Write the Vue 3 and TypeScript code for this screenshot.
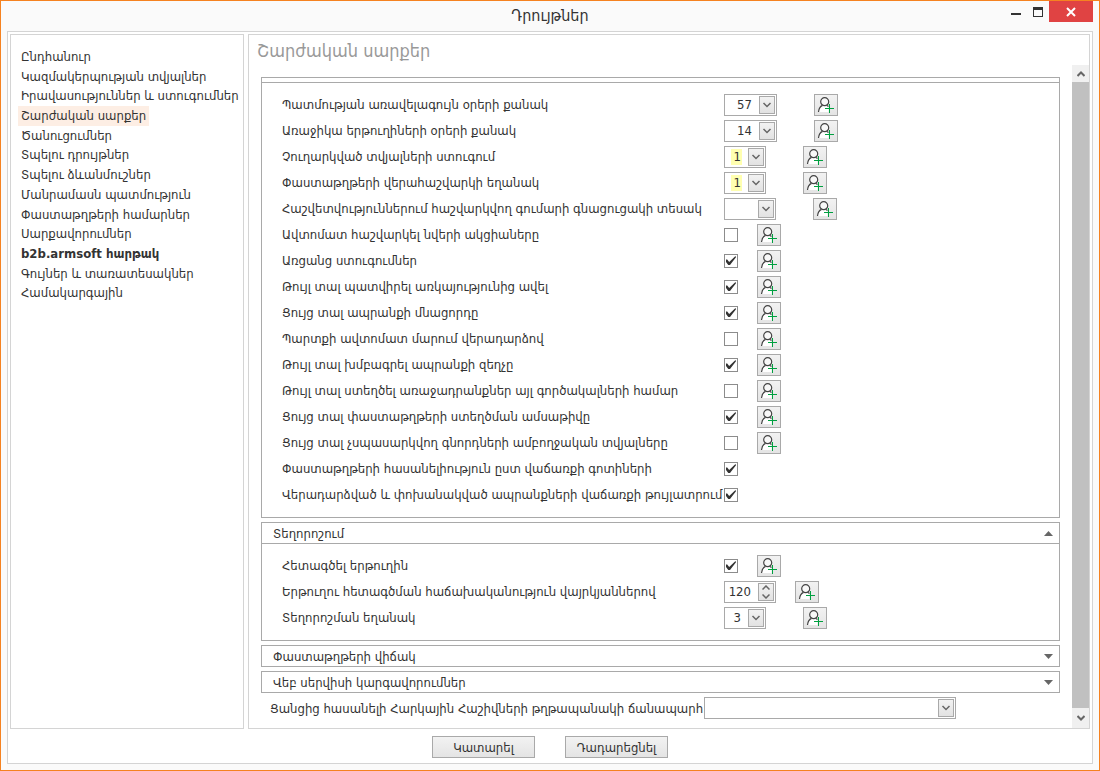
<script setup lang="ts">
import { reactive, ref } from 'vue'

interface Row {
  id: string
  label: string
  kind: 'combo' | 'check' | 'spin'
  value?: string
  size?: 'small' | 'medium' | 'large'
  marked?: boolean
  checked?: boolean
  user?: boolean
}

const sections = [
  'Ընդհանուր',
  'Կազմակերպության տվյալներ',
  'Իրավասություններ և ստուգումներ',
  'Շարժական սարքեր',
  'Ծանուցումներ',
  'Տպելու դրույթներ',
  'Տպելու ձևանմուշներ',
  'Մանրամասն պատմություն',
  'Փաստաթղթերի համարներ',
  'Սարքավորումներ',
  'b2b.armsoft հարթակ',
  'Գույներ և տառատեսակներ',
  'Համակարգային',
]
const active = ref(3)
const boldIndex = 10

const general = reactive<Row[]>([
  { id: 'history', label: 'Պատմության առավելագույն օրերի քանակ', kind: 'combo', value: '57', size: 'large', user: true },
  { id: 'routes', label: 'Առաջիկա երթուղիների օրերի քանակ', kind: 'combo', value: '14', size: 'large', user: true },
  { id: 'unsent', label: 'Չուղարկված տվյալների ստուգում', kind: 'combo', value: '1', size: 'small', marked: true, user: true },
  { id: 'recalc', label: 'Փաստաթղթերի վերահաշվարկի եղանակ', kind: 'combo', value: '1', size: 'small', marked: true, user: true },
  { id: 'price', label: 'Հաշվետվություններում հաշվարկվող գումարի գնացուցակի տեսակ', kind: 'combo', value: '', size: 'medium', user: true },
  { id: 'gifts', label: 'Ավտոմատ հաշվարկել նվերի ակցիաները', kind: 'check', checked: false, user: true },
  { id: 'online', label: 'Առցանց ստուգումներ', kind: 'check', checked: true, user: true },
  { id: 'over', label: 'Թույլ տալ պատվիրել առկայությունից ավել', kind: 'check', checked: true, user: true },
  { id: 'stock', label: 'Ցույց տալ ապրանքի մնացորդը', kind: 'check', checked: true, user: true },
  { id: 'debt', label: 'Պարտքի ավտոմատ մարում վերադարձով', kind: 'check', checked: false, user: true },
  { id: 'discount', label: 'Թույլ տալ խմբագրել ապրանքի զեղչը', kind: 'check', checked: true, user: true },
  { id: 'tasks', label: 'Թույլ տալ ստեղծել առաջադրանքներ այլ գործակալների համար', kind: 'check', checked: false, user: true },
  { id: 'date', label: 'Ցույց տալ փաստաթղթերի ստեղծման ամսաթիվը', kind: 'check', checked: true, user: true },
  { id: 'buyers', label: 'Ցույց տալ չսպասարկվող գնորդների ամբողջական տվյալները', kind: 'check', checked: false, user: true },
  { id: 'zones', label: 'Փաստաթղթերի հասանելիություն ըստ վաճառքի գոտիների', kind: 'check', checked: true },
  { id: 'returns', label: 'Վերադարձված և փոխանակված ապրանքների վաճառքի թույլատրում', kind: 'check', checked: true },
])

const location = reactive<Row[]>([
  { id: 'track', label: 'Հետագծել երթուղին', kind: 'check', checked: true, user: true },
  { id: 'freq', label: 'Երթուղու հետագծման հաճախականություն վայրկյաններով', kind: 'spin', value: '120', size: 'medium', user: true },
  { id: 'mode', label: 'Տեղորոշման եղանակ', kind: 'combo', value: '3', size: 'small', user: true },
])

const groups = reactive([
  { id: 'general', title: '', rows: general, open: true },
  { id: 'location', title: 'Տեղորոշում', rows: location, open: true },
  { id: 'documents', title: 'Փաստաթղթերի վիճակ', rows: [] as Row[], open: false },
  { id: 'web', title: 'Վեբ սերվիսի կարգավորումներ', rows: [] as Row[], open: false },
])

function step(row: Row, by: number) {
  row.value = String(Number(row.value) + by)
}
</script>

<template>
  <div class="window">
    <header class="titlebar">
      <h1>Դրույթներ</h1>
      <div class="window-buttons">
        <button type="button" class="win-btn" aria-label="Minimize">
          <svg width="12" height="12"><path d="M1 7h10v2H1z" fill="#333" /></svg>
        </button>
        <button type="button" class="win-btn" aria-label="Maximize">
          <svg width="12" height="12"><path d="M1 1h10v10H1z M2 4h8v6H2z" fill="#333" fill-rule="evenodd" /></svg>
        </button>
        <button type="button" class="win-btn close" aria-label="Close">
          <svg width="12" height="12"><path d="M2 2l8 8M10 2l-8 8" stroke="#fff" stroke-width="2" fill="none" /></svg>
        </button>
      </div>
    </header>

    <div class="frame">
      <div class="columns">
        <nav class="side">
          <ul>
            <li v-for="(name, i) in sections" :key="name">
              <a href="#" :class="{ active: i === active, bold: i === boldIndex }" @click.prevent="active = i">{{ name }}</a>
            </li>
          </ul>
        </nav>

        <main class="main">
          <h2>Շարժական սարքեր</h2>
          <div class="scroll-row">
            <div class="content">
              <section v-for="g in groups" :key="g.id" class="group">
                <button v-if="g.title" type="button" class="group-head" :aria-expanded="g.open" @click="g.open = !g.open">
                  <span>{{ g.title }}</span>
                  <svg width="9" height="5">
                    <path :d="g.open ? 'M0 5L4.5 0L9 5z' : 'M0 0h9L4.5 5z'" fill="#666" />
                  </svg>
                </button>
                <div v-else class="group-strip"></div>
                <div v-if="g.open && g.rows.length" class="group-body">
                  <div v-for="row in g.rows" :key="row.id" class="row">
                    <label :for="row.id">{{ row.label }}</label>

                    <span v-if="row.kind === 'check'" class="check">
                      <input :id="row.id" v-model="row.checked" type="checkbox" />
                      <svg v-if="row.checked" width="14" height="14" viewBox="0 0 14 14">
                        <path d="M2 5.500L3.200 5.500L5.200 8L11.500 2L12 3.200L6 11H4.300L2 8z" fill="#333" />
                      </svg>
                    </span>

                    <span v-else-if="row.kind === 'combo'" class="combo" :class="row.size">
                      <select :id="row.id" v-model="row.value" :class="{ marked: row.marked }">
                        <option :value="row.value">{{ row.value }}</option>
                      </select>
                      <span class="drop">
                        <svg width="10" height="6"><path d="M1.500 1L5 4.500L8.500 1" stroke="#666" stroke-width="1.500" fill="none" /></svg>
                      </span>
                    </span>

                    <span v-else class="combo" :class="row.size">
                      <input :id="row.id" v-model="row.value" type="text" />
                      <span class="drop spin">
                        <button type="button" aria-label="+" @click="step(row, 1)">
                          <svg width="8" height="5"><path d="M0.500 4.500L4 1L7.500 4.500" stroke="#666" stroke-width="1.500" fill="none" /></svg>
                        </button>
                        <button type="button" aria-label="-" @click="step(row, -1)">
                          <svg width="8" height="5"><path d="M0.500 0.500L4 4L7.500 0.500" stroke="#666" stroke-width="1.500" fill="none" /></svg>
                        </button>
                      </span>
                    </span>

                    <button v-if="row.user" type="button" class="user" :class="{ far: row.kind === 'combo' }" :aria-label="row.label">
                      <svg width="22" height="20" viewBox="0 0 22 20">
                        <path d="M3.500 17C3.800 13.500 5 11.500 7.500 10.500L12 10.500L13.500 13L13.500 17z" fill="#fff" />
                        <path d="M3.500 17C3.800 13.500 5 11.500 7.500 10.400M12 10.400L13.500 11.500" stroke="#444" stroke-width="1.200" fill="none" />
                        <circle cx="9.700" cy="6.700" r="4" fill="#f8f8f8" stroke="#444" stroke-width="1.200" />
                        <path d="M10 13.500h9M14.500 9v9" stroke="#00a040" stroke-width="1" fill="none" />
                      </svg>
                    </button>
                  </div>
                </div>
              </section>

              <div class="path-row">
                <label for="path">Ցանցից հասանելի Հարկային Հաշիվների թղթապանակի ճանապարհ</label>
                <span class="combo wide">
                  <select id="path"><option></option></select>
                  <span class="drop">
                    <svg width="10" height="6"><path d="M1.500 1L5 4.500L8.500 1" stroke="#666" stroke-width="1.500" fill="none" /></svg>
                  </span>
                </span>
              </div>
            </div>

            <div class="scrollbar">
              <button type="button" aria-label="Scroll up">
                <svg width="8" height="6"><path d="M0.500 5L4 1.500L7.500 5" stroke="#666" stroke-width="2" fill="none" /></svg>
              </button>
              <div class="thumb"></div>
              <button type="button" aria-label="Scroll down">
                <svg width="8" height="6"><path d="M0.500 1L4 4.500L7.500 1" stroke="#666" stroke-width="2" fill="none" /></svg>
              </button>
            </div>
          </div>
        </main>
      </div>

      <footer class="actions">
        <button type="button">Կատարել</button>
        <button type="button">Դադարեցնել</button>
      </footer>
    </div>
  </div>
</template>

<style>
body {
  margin: 0;
}
</style>

<style scoped>
* {
  box-sizing: border-box;
}

.window {
  min-height: 100vh;
  display: flex;
  flex-direction: column;
  padding: 0 6px 6px;
  border: 1px solid #f58220;
  background: #fafafa;
  color: #333;
  font-family: 'DejaVu Sans Condensed', 'DejaVu Sans', sans-serif;
  font-size: 13px;
}

button,
input,
select {
  font: inherit;
  color: inherit;
}

svg {
  display: block;
}

.titlebar {
  display: grid;
  grid-template-columns: 1fr auto 1fr;
  height: 30px;
}

h1 {
  grid-column: 2;
  margin: 0;
  font-size: 16px;
  font-weight: 400;
  line-height: 30px;
}

.window-buttons {
  display: flex;
  justify-content: flex-end;
  align-items: flex-start;
}

.win-btn {
  display: flex;
  align-items: center;
  justify-content: center;
  width: 22px;
  height: 21px;
  padding: 0;
  border: 0;
  background: none;
}

.close {
  width: 44px;
  background: #e04343;
}

.frame {
  flex: 1;
  display: flex;
  flex-direction: column;
  padding: 2px 2px 0;
  border: 1px solid #d4d4d4;
  background: #fff;
}

.columns {
  flex: 1;
  display: grid;
  grid-template-columns: 234px minmax(0, 1fr);
  gap: 4px;
}

.side,
.main {
  border: 1px solid #d4d4d4;
}

.side ul {
  display: grid;
  grid-auto-rows: minmax(0, 1fr);
  height: 256px;
  margin: 12px 0 0;
  padding: 0 0 0 7px;
  list-style: none;
}

.side a {
  display: block;
  width: fit-content;
  height: 100%;
  padding: 0 3px;
  color: #333;
  line-height: 20px;
  text-decoration: none;
  white-space: nowrap;
}

.side a.active {
  background: #fdeee4;
}

.side a.bold {
  font-weight: 700;
}

.main {
  display: flex;
  flex-direction: column;
}

h2 {
  height: 30px;
  margin: 0;
  padding-left: 8px;
  color: #999;
  font-size: 18px;
  font-weight: 400;
  line-height: 32px;
}

.scroll-row {
  flex: 1;
  display: flex;
  gap: 12px;
}

.content {
  flex: 1;
  min-width: 0;
  padding: 12px 0 8px 12px;
}

.group {
  margin-bottom: 4px;
  border: 1px solid #a9a9a9;
}

.group-strip {
  height: 4px;
}

.group-head {
  display: flex;
  align-items: center;
  justify-content: space-between;
  width: 100%;
  height: 20px;
  padding: 0 6px 0 11px;
  border: 0;
  background: none;
  text-align: left;
}

.group-body {
  padding: 9px 0 9px 20px;
  border-top: 1px solid #a9a9a9;
}

.row {
  display: flex;
  align-items: center;
  height: 26px;
}

.row label {
  width: 442px;
  padding-bottom: 1px;
  white-space: nowrap;
}

.check {
  display: grid;
  width: 14px;
  height: 14px;
}

.check > * {
  grid-area: 1 / 1;
}

.check input {
  width: 14px;
  height: 14px;
  margin: 0;
  border: 1px solid #8c8c8c;
  background: #fff;
  appearance: none;
}

.check svg {
  pointer-events: none;
}

.combo {
  display: flex;
  position: relative;
  height: 22px;
  border: 1px solid #a9a9a9;
  background: #fff;
}

.small {
  width: 42px;
}

.medium {
  width: 52px;
}

.large {
  width: 53px;
}

.wide {
  width: 252px;
}

.combo select,
.combo input {
  width: 100%;
  padding: 0 24px 1px 0;
  border: 0;
  outline: 0;
  background: none;
  text-align: right;
  appearance: none;
}

.combo select.marked {
  background: linear-gradient(#ffffb0, #ffffb0) 6px 2px / 11px 16px no-repeat;
}

.drop {
  position: absolute;
  top: 1px;
  right: 1px;
  display: flex;
  flex-direction: column;
  align-items: center;
  justify-content: center;
  width: 16px;
  height: 18px;
  border: 1px solid #a9a9a9;
  background: linear-gradient(#f2f2f2, #e2e2e2);
  pointer-events: none;
}

.drop.spin {
  gap: 4px;
  pointer-events: auto;
}

.drop button {
  padding: 0;
  border: 0;
  background: none;
}

.user {
  width: 24px;
  height: 22px;
  margin-left: 19px;
  padding: 0;
  border: 1px solid #a9a9a9;
  background: linear-gradient(#f2f2f2, #e4e4e4);
}

.user.far {
  margin-left: 37px;
}

.path-row {
  display: flex;
  align-items: center;
  padding-left: 9px;
}

.path-row label {
  width: 434px;
  white-space: nowrap;
}

.scrollbar {
  display: flex;
  flex-direction: column;
  width: 17px;
  background: #f0f0f0;
}

.scrollbar button {
  display: flex;
  align-items: center;
  justify-content: center;
  height: 17px;
  padding: 0;
  border: 0;
  background: #f0f0f0;
}

.scrollbar button:last-child {
  height: 20px;
}

.thumb {
  flex: 1;
  background: #c0c0c0;
}

.actions {
  display: flex;
  justify-content: center;
  gap: 30px;
  padding: 7px 0 5px;
}

.actions button {
  width: 103px;
  height: 22px;
  padding: 0;
  border: 1px solid #a9a9a9;
  background: linear-gradient(#f2f2f2, #e4e4e4);
}
</style>
